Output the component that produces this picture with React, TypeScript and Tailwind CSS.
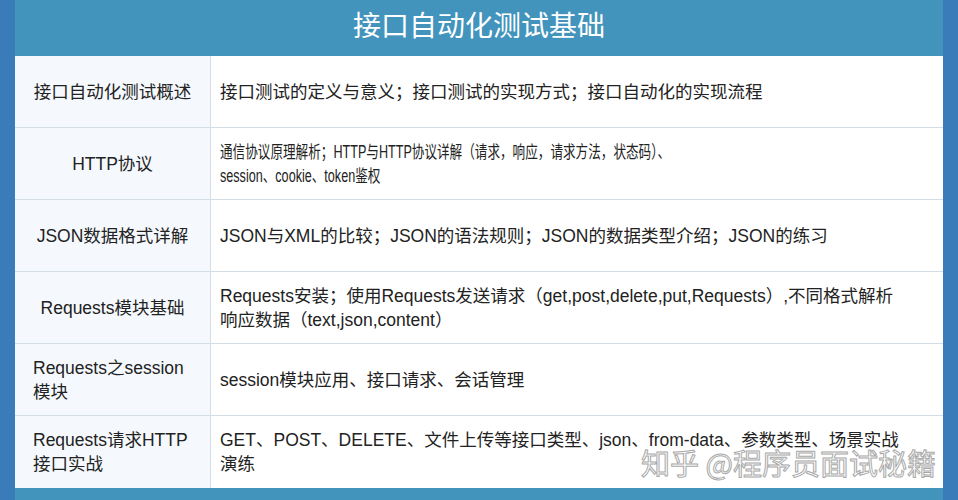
const rows: { title: string[]; center: boolean; body: string[]; squeeze?: boolean }[] = [
  {
    title: ['接口自动化测试概述'],
    center: true,
    body: ['接口测试的定义与意义；接口测试的实现方式；接口自动化的实现流程'],
  },
  {
    title: ['HTTP协议'],
    center: true,
    body: ['通信协议原理解析；HTTP与HTTP协议详解（请求，响应，请求方法，状态码）、', 'session、cookie、token鉴权'],
    squeeze: true,
  },
  {
    title: ['JSON数据格式详解'],
    center: true,
    body: ['JSON与XML的比较；JSON的语法规则；JSON的数据类型介绍；JSON的练习'],
  },
  {
    title: ['Requests模块基础'],
    center: true,
    body: ['Requests安装；使用Requests发送请求（get,post,delete,put,Requests）,不同格式解析', '响应数据（text,json,content）'],
  },
  {
    title: ['Requests之session', '模块'],
    center: false,
    body: ['session模块应用、接口请求、会话管理'],
  },
  {
    title: ['Requests请求HTTP', '接口实战'],
    center: false,
    body: ['GET、POST、DELETE、文件上传等接口类型、json、from-data、参数类型、场景实战', '演练'],
  },
];

export default function App() {
  return (
    <div
      className="relative flex w-[958px] h-[500px] bg-[#3a7cb9] text-[#222] overflow-hidden"
      style={{ fontFamily: '"Liberation Sans", "Noto Sans CJK SC", sans-serif' }}
    >
      <div className="w-[15px] shrink-0" />
      <div className="flex flex-col flex-1 bg-[#4394bd]">
        {/* header */}
        <div className="h-[56px] flex items-center justify-center text-white text-[28px] pb-[3px]">
          接口自动化测试基础
        </div>

        {/* table */}
        <div className="flex flex-col">
          {rows.map((r, i) => (
            <div
              key={i}
              className={`flex h-[72px] ${i < rows.length - 1 ? 'border-b border-[#d5dde5]' : ''}`}
            >
              <div
                className={`w-[196px] shrink-0 flex items-center bg-[#f5f9fd] border-r border-[#d5dde5] text-[17.5px] leading-[24px] ${
                  r.center ? 'justify-center text-center' : 'pl-[18px]'
                }`}
              >
                <div className="whitespace-nowrap">
                  {r.title.map((t, j) => (
                    <div key={j}>{t}</div>
                  ))}
                </div>
              </div>
              <div className="flex-1 flex items-center bg-white pl-[9px] text-[17.5px] leading-[24px]">
                <div className={`whitespace-nowrap ${r.squeeze ? 'origin-left scale-x-[0.72]' : ''}`}>
                  {r.body.map((t, j) => (
                    <div key={j}>{t}</div>
                  ))}
                </div>
              </div>
            </div>
          ))}
        </div>
      </div>
      <div className="w-[15px] shrink-0" />

      {/* watermark */}
      <div
        className="absolute left-[641px] top-[442px] text-[29px] leading-[40px] text-white/80 whitespace-nowrap [-webkit-text-stroke:1px_#a8a8a8]"
        style={{ fontFamily: '"Noto Sans CJK SC", sans-serif' }}
      >
        知乎 @程序员面试秘籍
      </div>
    </div>
  );
}
